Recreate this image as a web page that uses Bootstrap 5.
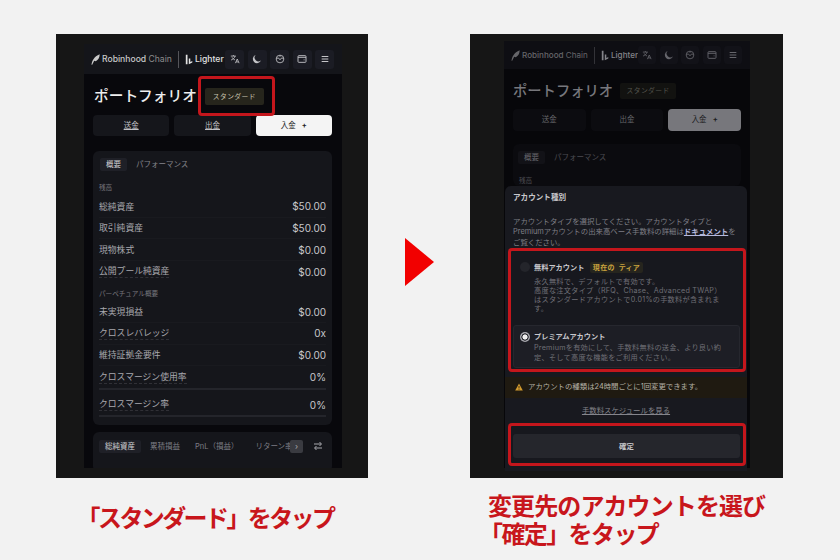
<!DOCTYPE html>
<html lang="ja">
<head>
    <meta charset="UTF-8">
    <meta name="viewport" content="width=device-width, initial-scale=1.0">
    <title>アカウント種別の変更</title>
    <link href="https://cdn.jsdelivr.net/npm/bootstrap@5.3.0/dist/css/bootstrap.min.css" rel="stylesheet">
    <style>
        body { background-color: #f2f2f2; font-family: "Inter", "Noto Sans CJK JP", sans-serif; width: 840px; height: 560px; overflow: hidden; }
        .stage { padding: 34px 0 0 56px; }
        .shot-left { width: 312px; flex: none; }
        .shot-right { width: 313px; flex: none; }
        .arrow-col { width: 102px; flex: none; padding: 204px 0 0 37px; }
        .shot-frame { background: #161616; height: 444px; position: relative; }
        .shot-left .shot-frame { padding: 10px 26px 10px 28px; }
        .shot-right .shot-frame { padding: 7px 33px 10px 34px; }
        .app { background: #08080c; height: 100%; overflow: hidden; }

        .topbar { height: 30px; background: #14151a; padding: 0 8px 0 7px; }
        .brand-a { font: 500 8.6px "Inter", sans-serif; color: #c9c9c9; white-space: nowrap; width: 69px; }
        .brand-a span { color: #8d8d8d; font-weight: 400; }
        .brand-b { font: 500 8.6px "Inter", sans-serif; color: #e2e2e2; }
        .brand-sep { width: 1px; height: 17px; background: #55555a; margin: 0 6px 0 7px; flex: none; }
        .logo-a { width: 9px; height: 11px; margin-right: 2px; flex: none; color: #c9c9c9; }
        .logo-b { width: 8px; height: 11px; margin-right: 2px; flex: none; color: #e2e2e2; }
        .top-icons { gap: 3.5px; }
        .top-ico { width: 19px; height: 19px; border-radius: 3px; background: #1b1c24; color: #c4c4c8; }
        .top-ico svg { width: 10px; height: 10px; }

        .page-h { padding: 11px 9px 0 10px; gap: 8px; }
        .page-title { font-size: 14.7px; font-weight: 500; color: #eeeeee; line-height: 22px; white-space: nowrap; }
        .tier-tag { font-size: 6.8px; color: #c8c4b0; background: #26251c; border-radius: 2px; width: 59px; height: 17px; line-height: 17px; text-align: center; letter-spacing: .4px; position: relative; }
        .tier-ring::after { content: ""; position: absolute; left: -7px; right: -11px; top: -12px; bottom: -11px; border: 3px solid #c4161c; border-radius: 4px; }
        .act-row { margin: 8px 10px 0 9px; gap: 5px; }
        .act-btn { height: 21px; flex: 1 1 0; background: #15161b; color: #c0c0c4; font-size: 7.5px; border: 0; border-radius: 4px; display: flex; align-items: center; justify-content: center; gap: 6px; padding: 0; }
        .shot-left .act-btn { text-decoration: underline; }
        .act-btn.on { background: #f4f4f4; color: #222; text-decoration: none !important; }

        .panel { background: #15161b; border-radius: 6px; margin: 15px 10px 0 9px; }
        .panel-main { padding-bottom: 8px; }
        .tabs-mini { padding: 7px 7px 0; font-size: 7.5px; color: #85858c; gap: 9px; line-height: 13px; }
        .tab-on { background: #1f2027; color: #d0d0d4; border-radius: 2px; padding: 0 6px; white-space: nowrap; }
        .sect-h { font-size: 6.6px; color: #75757c; margin: 12px 6px 0; line-height: 10px; }
        .rows-a { margin-top: 3px; }
        .rows-b { margin-top: 2.6px; }
        .sect-b { margin-top: 6px; }
        .stat-row { display: flex; justify-content: space-between; align-items: center; margin: 0 6px; height: 21.7px; font-size: 8.8px; color: #a8a8ae; border-bottom: 1px solid #191a1f; }
        .stat-row b { font: 400 10px "Inter", sans-serif; color: #c8c8cc; }
        .dash { border-bottom: 1px dashed #303036; line-height: 12px; }
        .stat-row.plain { border-bottom: 0; }
        .stat-bar { height: 2px; background: #24252b; margin: 0 6px; }
        .bar-gap { margin-top: 3.6px; }
        .panel-b { margin-top: 7px; height: 40px; padding: 8px 6px 0; position: relative; font-size: 7.5px; color: #7d7d84; line-height: 13px; gap: 9px; white-space: nowrap; overflow: hidden; }
        .pnl-tab { margin-left: 6px; }
        .next-chip { position: absolute; left: 197px; top: 8px; width: 13px; height: 13px; background: #3a3b41; border-radius: 2px; color: #aaa; font-size: 8px; line-height: 12px; text-align: center; }
        .filter-ico { position: absolute; left: 220px; top: 9px; width: 10px; height: 10px; color: #a8a8ae; }

        /* 右側: オーバーレイで暗い */
        .dim .app { background: #07070a; }
        .dim .topbar { background: #0e0e13; height: 28px; }
        .dim .brand-a { width: 65px; font-size: 8.1px; }
        .dim .brand-a, .dim .brand-a span { color: #66666a; }
        .dim .brand-b { color: #84848a; font-size: 8.1px; }
        .dim .logo-a { color: #66666a; }
        .dim .logo-b { color: #84848a; }
        .dim .brand-sep { background: #333338; }
        .dim .top-ico { background: #121218; color: #66666c; width: 18px; height: 18px; }
        .dim .page-h { padding: 12px 9px 0 9px; gap: 7px; }
        .dim .page-title { color: #77777c; font-size: 14.3px; line-height: 20px; }
        .dim .tier-tag { background: #121210; color: #55554e; width: 56px; height: 16px; line-height: 16px; }
        .dim .act-row { margin: 8px 9px 0; }
        .dim .act-btn { background: #0c0c10; color: #66666a; height: 22px; }
        .dim .act-btn.on { background: #77777c; color: #1c1c1e; }
        .dim .panel { background: #0b0b0f; margin: 13px 9px 0; }
        .dim .tab-on { background: #121217; color: #66666c; }
        .dim .tabs-mini, .dim .sect-h { color: #4c4c52; }
        .dim .tabs-mini { padding: 7px 5px 0; }

        .sheet { position: absolute; left: 35px; top: 152px; width: 242px; background: #18191f; border-radius: 6px 6px 0 0; }
        .sheet-title { font-size: 7.6px; font-weight: 700; color: #c8c8cc; margin: 6px 8px 12.7px; line-height: 12px; }
        .sheet-text { font-size: 7.4px; color: #7f7f86; margin: 0 2px 0 8px; line-height: 10.5px; white-space: nowrap; }
        .sheet-text a { color: #b4b8dc; font-weight: 700; }
        .red-wrap { border: 3px solid #c4161c; border-radius: 4px; margin: 0 1px 0 3px; background: #17181e; }
        .opt-free { padding: 9.5px 4px 11px 9px; gap: 4px; }
        .opt-sel { background: #1d1e25; border: 1px solid #26272e; border-radius: 3px; margin: 0 3px 1px 2px; padding: 4.5px 6px 3.5px 6px; gap: 4px; }
        .rad { width: 10px; height: 10px; border-radius: 50%; background: #24252b; flex: none; margin-top: 1.5px; }
        .rad-sel { background: radial-gradient(circle, #eeeeee 0 2.3px, #2c2c32 2.8px 3.4px, #a8a8ae 3.9px 5px); }
        .opt-name { font-size: 7.2px; font-weight: 700; color: #c8c8cc; line-height: 13px; white-space: nowrap; }
        .cur-tag { font-size: 7px; font-weight: 700; color: #c9a33e; background: #26251e; border-radius: 2px; padding: 1px 3px; margin-left: 5.5px; letter-spacing: .3px; word-spacing: 2px; }
        .opt-desc { font-size: 7.2px; letter-spacing: .25px; color: #6f6f76; line-height: 9.2px; margin-top: 3px; white-space: nowrap; }
        .opt-sel .opt-desc { line-height: 10px; margin-top: 0; }
        .warn-bar { background: #1f1a11; height: 21px; margin-top: 5px; padding: 0 0 0 10px; font-size: 7.4px; color: #b4b0a4; gap: 5px; white-space: nowrap; }
        .warn-bar svg { width: 8px; height: 8px; flex: none; }
        .sched { font-size: 7.4px; color: #85858c; text-align: center; margin: 7.5px 0 6.5px; line-height: 11px; text-decoration: underline; }
        .ok-wrap { padding: 5px 3px 5px 2px; margin-bottom: 5px; }
        .ok-btn { background: #25262c; height: 24px; width: 100%; border: 0; border-radius: 3px; color: #c4c4c8; font-size: 7.4px; font-weight: 700; padding: 0; }

        .cap { color: #c8161c; font-weight: 700; white-space: nowrap; font-family: "Noto Sans CJK JP", sans-serif; }
        .cap-left { font-size: 24px; line-height: 30px; text-align: center; margin-top: 24px; letter-spacing: -2.6px; padding-right: 14px; }
        .cap-right { font-size: 24px; line-height: 28px; margin-left: 18px; letter-spacing: -.9px; }
        .cap-first { margin-top: 13px; }
        .cap-second { margin-left: 9px; letter-spacing: -1.6px; }
    </style>
</head>
<body>
    <svg width="0" height="0" class="d-block position-absolute">
        <symbol id="i-feather" viewBox="0 0 9 11"><path d="M.5 10.8C1 7 3 2.5 8.7.3 8.6 3 7.8 5.8 4.8 7.2L3.2 6.8 1.2 10.8Z" fill="currentColor"/></symbol>
        <symbol id="i-lighter" viewBox="0 0 8 11"><path d="M.8 .8h1.7v9.4H.8zM3.8 4.5h1.5v3.4l2-1v1.5L3.8 10.2z" fill="currentColor"/></symbol>
        <symbol id="i-lang" viewBox="0 0 12 12"><path d="M1 2.5h6M4 1.2v1.3M6 2.5C5.5 5 3.5 6.5 1.3 7.2M2.5 4c.7 1.5 2 2.6 3.5 3.2M6.5 11l2.2-5 2.2 5M7.3 9.5h2.8" fill="none" stroke="currentColor"/></symbol>
        <symbol id="i-moon" viewBox="0 0 12 12"><path d="M4.5 1.2A5 5 0 1 0 10.8 7.5 4.2 4.2 0 0 1 4.5 1.2Z" fill="currentColor"/></symbol>
        <symbol id="i-dial" viewBox="0 0 12 12"><g fill="none" stroke="currentColor"><circle cx="6" cy="6" r="4.6"/><path d="M1.5 5h3l1.5 2 1.5-2h3M6 1.4v2"/></g></symbol>
        <symbol id="i-wallet" viewBox="0 0 12 12"><g fill="none" stroke="currentColor" stroke-width="1.1"><rect x="1.2" y="2" width="9.6" height="8" rx="1"/><path d="M1.2 4h9.6M8 7h1"/></g></symbol>
        <symbol id="i-menu" viewBox="0 0 12 12"><path d="M2 3h8M2 6h8M2 9h8" fill="none" stroke="currentColor" stroke-width="1.2"/></symbol>
    </svg>

    <div class="stage d-flex">
        <!-- 左: ポートフォリオ -->
        <div class="shot-left">
            <div class="shot-frame">
                <div class="app">
                    <div class="topbar d-flex align-items-center">
                        <svg class="logo-a"><use href="#i-feather"/></svg>
                        <div class="brand-a">Robinhood <span>Chain</span></div>
                        <div class="brand-sep"></div>
                        <svg class="logo-b"><use href="#i-lighter"/></svg>
                        <div class="brand-b">Lighter</div>
                        <div class="top-icons d-flex ms-auto">
                            <div class="top-ico d-flex align-items-center justify-content-center"><svg><use href="#i-lang"/></svg></div>
                            <div class="top-ico d-flex align-items-center justify-content-center"><svg><use href="#i-moon"/></svg></div>
                            <div class="top-ico d-flex align-items-center justify-content-center"><svg><use href="#i-dial"/></svg></div>
                            <div class="top-ico d-flex align-items-center justify-content-center"><svg><use href="#i-wallet"/></svg></div>
                            <div class="top-ico d-flex align-items-center justify-content-center"><svg><use href="#i-menu"/></svg></div>
                        </div>
                    </div>
                    <div class="page-h d-flex align-items-center">
                        <div class="page-title">ポートフォリオ</div>
                        <div class="tier-tag tier-ring">スタンダード</div>
                    </div>
                    <div class="act-row d-flex">
                        <button class="act-btn" type="button">送金</button>
                        <button class="act-btn" type="button">出金</button>
                        <button class="act-btn on" type="button">入金 <span class="fw-bold">+</span></button>
                    </div>
                    <div class="panel panel-main">
                        <div class="tabs-mini d-flex align-items-center"><span class="tab-on">概要</span><span>パフォーマンス</span></div>
                        <div class="sect-h">残高</div>
                        <div class="rows-a">
                            <div class="stat-row"><span>総純資産</span><b>$50.00</b></div>
                            <div class="stat-row"><span>取引純資産</span><b>$50.00</b></div>
                            <div class="stat-row"><span>現物株式</span><b>$0.00</b></div>
                            <div class="stat-row plain"><span class="dash">公開プール純資産</span><b>$0.00</b></div>
                        </div>
                        <div class="sect-h sect-b">パーペチュアル概要</div>
                        <div class="rows-b">
                            <div class="stat-row"><span>未実現損益</span><b>$0.00</b></div>
                            <div class="stat-row"><span class="dash">クロスレバレッジ</span><b>0x</b></div>
                            <div class="stat-row"><span>維持証拠金要件</span><b>$0.00</b></div>
                            <div class="stat-row plain"><span class="dash">クロスマージン使用率</span><b>0%</b></div>
                        </div>
                        <div class="stat-bar"></div>
                        <div class="stat-row plain bar-gap"><span class="dash">クロスマージン率</span><b>0%</b></div>
                        <div class="stat-bar"></div>
                    </div>
                    <div class="panel panel-b d-flex align-items-start">
                        <span class="tab-on">総純資産</span><span>累積損益</span><span class="pnl-tab">PnL（損益）</span><span class="ms-2">リターン率</span>
                        <span class="next-chip">›</span>
                        <svg class="filter-ico" viewBox="0 0 10 10" fill="none" stroke="currentColor"><path d="M1 3h7M6.5 1l2 2-2 2M9 7H2M3.5 5l-2 2 2 2"/></svg>
                    </div>
                </div>
            </div>
            <div class="cap cap-left">「スタンダード」をタップ</div>
        </div>

        <div class="arrow-col">
            <svg width="30" height="48" viewBox="0 0 30 48" class="d-block"><polygon points="0,0 29,24 0,48" fill="#f20000"/></svg>
        </div>

        <!-- 右: アカウント種別 -->
        <div class="shot-right dim">
            <div class="shot-frame">
                <div class="app">
                    <div class="topbar d-flex align-items-center">
                        <svg class="logo-a"><use href="#i-feather"/></svg>
                        <div class="brand-a">Robinhood <span>Chain</span></div>
                        <div class="brand-sep"></div>
                        <svg class="logo-b"><use href="#i-lighter"/></svg>
                        <div class="brand-b">Lighter</div>
                        <div class="top-icons d-flex ms-auto">
                            <div class="top-ico d-flex align-items-center justify-content-center"><svg><use href="#i-lang"/></svg></div>
                            <div class="top-ico d-flex align-items-center justify-content-center"><svg><use href="#i-moon"/></svg></div>
                            <div class="top-ico d-flex align-items-center justify-content-center"><svg><use href="#i-dial"/></svg></div>
                            <div class="top-ico d-flex align-items-center justify-content-center"><svg><use href="#i-wallet"/></svg></div>
                            <div class="top-ico d-flex align-items-center justify-content-center"><svg><use href="#i-menu"/></svg></div>
                        </div>
                    </div>
                    <div class="page-h d-flex align-items-center">
                        <div class="page-title">ポートフォリオ</div>
                        <div class="tier-tag">スタンダード</div>
                    </div>
                    <div class="act-row d-flex">
                        <button class="act-btn" type="button">送金</button>
                        <button class="act-btn" type="button">出金</button>
                        <button class="act-btn on" type="button">入金 <span class="fw-bold">+</span></button>
                    </div>
                    <div class="panel">
                        <div class="tabs-mini d-flex align-items-center"><span class="tab-on">概要</span><span>パフォーマンス</span></div>
                        <div class="sect-h">残高</div>
                    </div>
                </div>

                <div class="sheet">
                    <div class="sheet-title">アカウント種別</div>
                    <div class="sheet-text">アカウントタイプを選択してください。アカウントタイプと</div>
                    <div class="sheet-text">Premiumアカウントの出来高ベース手数料の詳細は<a href="#">ドキュメント</a>を</div>
                    <div class="sheet-text">ご覧ください。</div>
                    <div class="red-wrap">
                        <div class="opt-free d-flex">
                            <div class="rad"></div>
                            <div>
                                <div class="opt-name">無料アカウント<span class="cur-tag">現在の ティア</span></div>
                                <div class="opt-desc">永久無料で、デフォルトで有効です。<br>高度な注文タイプ（RFQ、Chase、Advanced TWAP）<br>はスタンダードアカウントで0.01%の手数料が含まれま<br>す。</div>
                            </div>
                        </div>
                        <div class="opt-sel d-flex">
                            <div class="rad rad-sel"></div>
                            <div>
                                <div class="opt-name">プレミアムアカウント</div>
                                <div class="opt-desc">Premiumを有効にして、手数料無料の送金、より良い約<br>定、そして高度な機能をご利用ください。</div>
                            </div>
                        </div>
                    </div>
                    <div class="warn-bar d-flex align-items-center">
                        <svg viewBox="0 0 8 8"><path d="M4 .5 7.8 7.5H.2Z" fill="#d29a2e"/><path d="M4 3v2.4M4 6v.7" stroke="#1f1a11" stroke-width=".8"/></svg>
                        <span>アカウントの種類は24時間ごとに1回変更できます。</span>
                    </div>
                    <div class="sched">手数料スケジュールを見る</div>
                    <div class="red-wrap ok-wrap"><button class="ok-btn" type="button">確定</button></div>
                </div>
            </div>
            <div class="cap cap-right cap-first">変更先のアカウントを選び</div>
            <div class="cap cap-right cap-second">「確定」をタップ</div>
        </div>
    </div>
</body>
</html>
